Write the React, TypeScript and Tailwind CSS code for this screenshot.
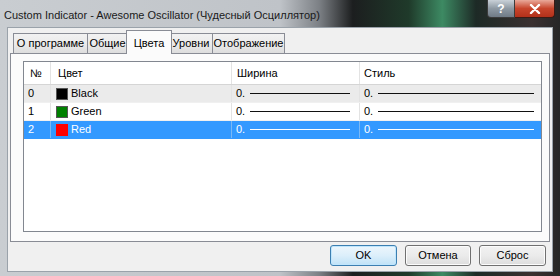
import React from "react";

const font = { fontFamily: '"Liberation Sans", Arial, sans-serif' };

const tabs = [
  { label: "О программе", w: "w-[75px]" },
  { label: "Общие", w: "w-[41px]" },
  { label: "Цвета", w: "w-[46px]", active: true },
  { label: "Уровни", w: "w-[44px]" },
  { label: "Отображение", w: "w-[73px]" },
];

const rows = [
  { n: "0", name: "Black", color: "bg-black", bg: "bg-[#ebebeb]" },
  { n: "1", name: "Green", color: "bg-[#008000]", bg: "bg-white" },
  { n: "2", name: "Red", color: "bg-[#ff0000]", bg: "bg-[#3399ff]", selected: true },
];

function LineCell({ selected, line }: { selected?: boolean; line: string }) {
  return (
    <div className="flex items-center h-full pl-[4px] pr-[7px]">
      <span>0.</span>
      <div className={`ml-[5px] h-px ${line} ${selected ? "bg-white" : "bg-[#111]"}`}></div>
    </div>
  );
}

export default function App() {
  return (
    <div
      className="w-[560px] h-[276px] overflow-hidden flex flex-col px-[7px] pb-[4px] bg-[linear-gradient(90deg,#c9cdd1_0%,#bfc3c8_50%,#7c8085_57%,#1c1e1f_63%,#1f3a2a_73%,#3d8a63_79%,#1d2a26_85%,#3a3030_95%,#262626_100%)] text-[11px] text-black"
      style={font}
    >
      {/* title bar */}
      <div className="h-[27px] flex items-start shrink-0 -mx-[7px]">
        <div className="pl-[4px] pt-[7px] text-[11px] text-[#1a1a1a]">
          Custom Indicator - Awesome Oscillator (Чудесный Осциллятор)
        </div>
        <div className="ml-auto mr-[5px] flex">
          <div className="w-[28px] h-[18px] rounded-bl-[4px] border border-t-0 border-[#3b3b3b] bg-[linear-gradient(180deg,#c9d1d8,#8e99a3_50%,#6f7b86)] flex items-center justify-center text-white font-bold text-[12px]">
            ?
          </div>
          <div className="w-[40px] h-[18px] rounded-br-[4px] border border-t-0 border-l-0 border-[#3b1a14] bg-[linear-gradient(180deg,#e9a99a,#c7452c_50%,#b2301a)] flex items-center justify-center">
            <svg width="12" height="10" viewBox="0 0 12 10">
              <path d="M2 1 L10 9 M10 1 L2 9" stroke="#fff" strokeWidth="2.4" strokeLinecap="round" />
            </svg>
          </div>
        </div>
      </div>

      {/* client area */}
      <div className="flex-1 bg-[#f0f0f0] border border-[#9aa2aa] flex flex-col px-[2px]">
        {/* tab strip */}
        <div className="h-[25px] flex items-end pl-[3px] shrink-0">
          {tabs.map((t) =>
            t.active ? (
              <div
                key={t.label}
                className={`${t.w} h-[24px] -mx-[2px] -mb-px z-10 relative bg-[#fbfbfb] border border-b-0 border-[#898c95] flex items-start justify-center pt-[4px] whitespace-nowrap`}
              >
                {t.label}
              </div>
            ) : (
              <div
                key={t.label}
                className={`${t.w} h-[20px] border border-b-0 border-[#898c95] -ml-px first:ml-0 bg-[linear-gradient(180deg,#f2f2f2,#ebebeb_50%,#dddddd)] flex items-center justify-center whitespace-nowrap`}
              >
                {t.label}
              </div>
            )
          )}
        </div>

        {/* tab panel */}
        <div className="h-[189px] bg-[#fbfbfb] border border-[#898c95] pl-[12px] pr-[8px] pt-[7px] pb-[9px] flex">
          <div className="flex-1 bg-white border border-[#828790] flex flex-col">
            {/* header */}
            <div className="h-[23px] flex border-b border-[#d5d5d5] bg-white">
              <div className="w-[27px] pl-[6px] flex items-center border-r border-[#e3e3e3]">№</div>
              <div className="w-[181px] pl-[7px] flex items-center border-r border-[#e3e3e3]">Цвет</div>
              <div className="w-[128px] pl-[5px] flex items-center border-r border-[#e3e3e3]">Ширина</div>
              <div className="flex-1 pl-[4px] flex items-center">Стиль</div>
            </div>
            {rows.map((r) => (
              <div
                key={r.n}
                className={`h-[18px] flex ${r.bg} ${r.selected ? "text-white" : "text-black"} border-b ${r.selected ? "border-[#3399ff]" : "border-[#f0f0f0]"}`}
              >
                <div className={`w-[27px] pl-[4px] flex items-center border-r ${r.selected ? "border-[#7ab8f5]" : "border-[#e3e3e3]"}`}>{r.n}</div>
                <div className={`w-[181px] pl-[5px] flex items-center border-r ${r.selected ? "border-[#7ab8f5]" : "border-[#e3e3e3]"}`}>
                  <span className={`w-[12px] h-[12px] ${r.color} border ${r.selected ? "border-[#ff0000]" : "border-[#555]"} mr-[3px]`}></span>
                  {r.name}
                </div>
                <div className={`w-[128px] border-r ${r.selected ? "border-[#7ab8f5]" : "border-[#e3e3e3]"}`}>
                  <LineCell selected={r.selected} line="w-[100px]" />
                </div>
                <div className="flex-1">
                  <LineCell selected={r.selected} line="w-[156px]" />
                </div>
              </div>
            ))}
            <div className="flex-1"></div>
          </div>
        </div>

        {/* buttons */}
        <div className="flex-1 flex items-center justify-end gap-[8px] pr-[4px] pb-[2px]">
          <button className="w-[67px] h-[21px] rounded-[3px] border border-[#3c7fb1] bg-[linear-gradient(180deg,#edf6fc,#dcefFb_50%,#bfe2f7)] shadow-[inset_0_0_0_1px_#bfe6fd]">
            OK
          </button>
          <button className="w-[66px] h-[21px] rounded-[3px] border border-[#707070] bg-[linear-gradient(180deg,#f2f2f2,#ebebeb_50%,#dddddd)] shadow-[inset_0_0_0_1px_#fcfcfc]">
            Отмена
          </button>
          <button className="w-[67px] h-[21px] rounded-[3px] border border-[#707070] bg-[linear-gradient(180deg,#f2f2f2,#ebebeb_50%,#dddddd)] shadow-[inset_0_0_0_1px_#fcfcfc]">
            Сброс
          </button>
        </div>
      </div>
    </div>
  );
}
